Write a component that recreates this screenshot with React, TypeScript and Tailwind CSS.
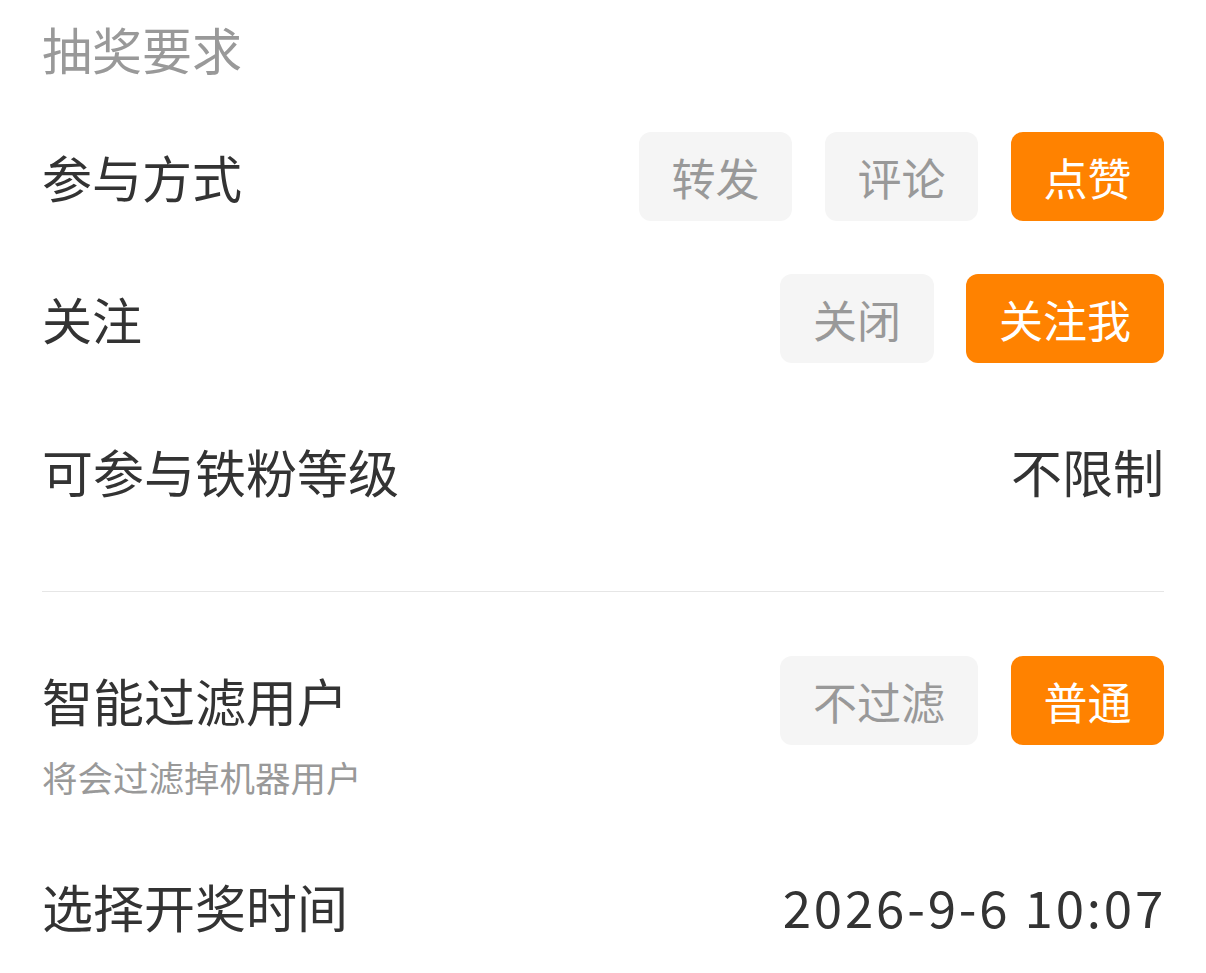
import React from "react";

const font = { fontFamily: '"Noto Sans CJK SC", "Noto Sans", sans-serif' };

function Btn({ label, active, w }: { label: string; active?: boolean; w: string }) {
  return (
    <div
      className={
        "flex h-[89px] items-center justify-center rounded-[12px] text-[44px] " +
        w +
        " " +
        (active ? "bg-[#ff8200] text-white" : "bg-[#f5f5f5] text-[#999999]")
      }
    >
      {label}
    </div>
  );
}

export default function App() {
  return (
    <div className="min-h-[973px] w-[1206px] bg-white px-[42px]" style={font}>
      <div className="flex h-[96px] items-center text-[50px] text-[#999999]">抽奖要求</div>

      <div className="mt-[36px] flex h-[89px] items-center justify-between">
        <div className="text-[50px] text-[#333333]">参与方式</div>
        <div className="flex gap-[33px]">
          <Btn label="转发" w="w-[153px]" />
          <Btn label="评论" w="w-[153px]" />
          <Btn label="点赞" w="w-[153px]" active />
        </div>
      </div>

      <div className="mt-[53px] flex h-[89px] items-center justify-between">
        <div className="text-[50px] text-[#333333]">关注</div>
        <div className="flex gap-[32px]">
          <Btn label="关闭" w="w-[154px]" />
          <Btn label="关注我" w="w-[198px]" active />
        </div>
      </div>

      <div className="mt-[64px] flex h-[89px] items-center justify-between text-[51px] text-[#333333]">
        <div>可参与铁粉等级</div>
        <div>不限制</div>
      </div>

      <div className="mt-[75px] h-px bg-[#e6e6e6]" />

      <div className="mt-[64px] flex h-[89px] items-center justify-between">
        <div className="text-[51px] text-[#333333]">智能过滤用户</div>
        <div className="flex gap-[33px]">
          <Btn label="不过滤" w="w-[198px]" />
          <Btn label="普通" w="w-[153px]" active />
        </div>
      </div>
      <div className="mt-[12px] flex h-[40px] items-center text-[35.5px] text-[#999999]">将会过滤掉机器用户</div>

      <div className="mt-[65px] flex h-[89px] items-center justify-between text-[51px] text-[#333333]">
        <div>选择开奖时间</div>
        <div className="-mr-[2px] tracking-[2.8px]">2026-9-6 10:07</div>
      </div>
    </div>
  );
}
